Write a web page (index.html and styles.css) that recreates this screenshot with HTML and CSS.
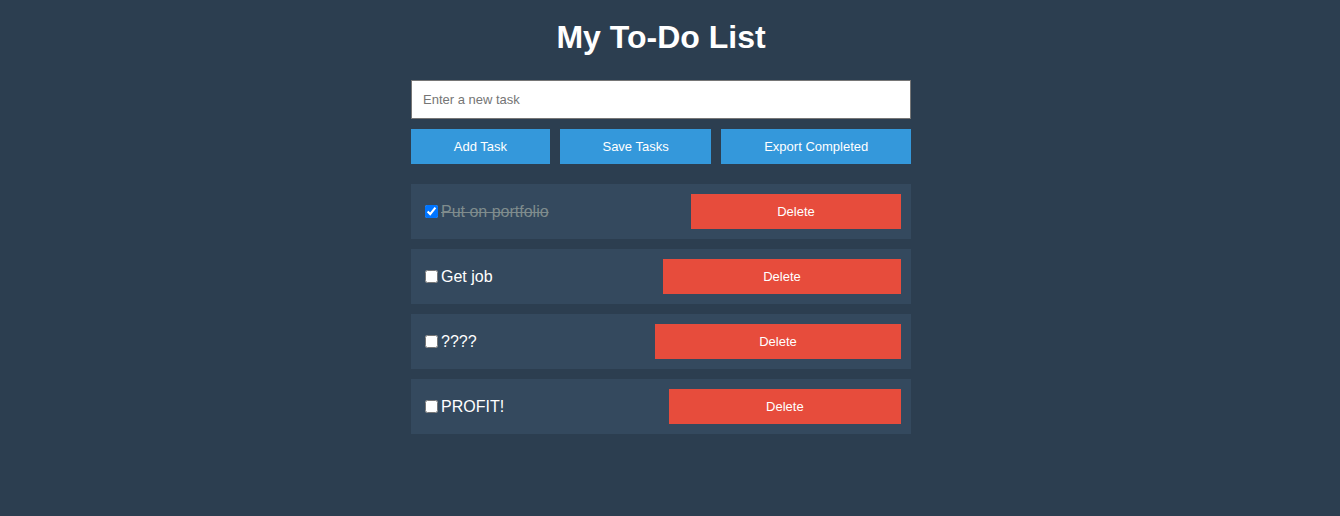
FILE: index.html
```html
<!DOCTYPE html>
<html lang="en">
<head>
<meta charset="utf-8">
<title>My To-Do List</title>
<link rel="stylesheet" href="styles.css">
</head>
<body>
<div class="container">
  <h1 class="title">My To-Do List</h1>
  <input class="task-input" type="text" placeholder="Enter a new task">
  <div class="actions">
    <button class="btn btn-blue">Add Task</button>
    <button class="btn btn-blue">Save Tasks</button>
    <button class="btn btn-blue">Export Completed</button>
  </div>
  <ul class="task-list">
    <li class="task">
      <label class="task-label done"><input type="checkbox" checked><span class="task-text">Put on portfolio</span></label>
      <button class="btn btn-red">Delete</button>
    </li>
    <li class="task">
      <label class="task-label"><input type="checkbox"><span class="task-text">Get job</span></label>
      <button class="btn btn-red">Delete</button>
    </li>
    <li class="task">
      <label class="task-label"><input type="checkbox"><span class="task-text">????</span></label>
      <button class="btn btn-red">Delete</button>
    </li>
    <li class="task">
      <label class="task-label"><input type="checkbox"><span class="task-text">PROFIT!</span></label>
      <button class="btn btn-red">Delete</button>
    </li>
  </ul>
</div>
</body>
</html>
```

FILE: styles.css
```css
html, body {
  background: #2c3e50;
}
body {
  margin: 0;
  padding: 19px 18px 20px 0;
  font-family: "Liberation Sans", Arial, sans-serif;
  color: #ffffff;
}
.container {
  width: 500px;
  margin: 0 auto;
}
.title {
  margin: 0 0 24px;
  font-size: 32px;
  font-weight: bold;
  text-align: center;
  line-height: 37px;
}
.task-input {
  display: block;
  box-sizing: border-box;
  width: 100%;
  height: 39px;
  margin: 0 0 10px;
  padding: 0 11px;
  border: 1px solid #767676;
  border-radius: 0;
  background: #ffffff;
  font-family: "Liberation Sans", Arial, sans-serif;
  font-size: 13px;
  color: #000;
}
.task-input::placeholder {
  color: #757575;
}
.actions {
  display: flex;
  gap: 10px;
  margin-bottom: 20px;
}
.btn {
  flex: 1 1 auto;
  box-sizing: border-box;
  height: 35px;
  padding: 0 15px;
  border: none;
  border-radius: 0;
  color: #ffffff;
  font-family: "Liberation Sans", Arial, sans-serif;
  font-size: 13px;
  cursor: pointer;
}
.btn-blue {
  background: #3498db;
}
.btn-red {
  background: #e74c3c;
}
.task-list {
  list-style: none;
  margin: 0;
  padding: 0;
  display: flex;
  flex-direction: column;
  gap: 10px;
}
.task {
  display: flex;
  align-items: center;
  height: 55px;
  box-sizing: border-box;
  padding: 10px;
  background: #34495e;
}
.task-label {
  flex: 1 1 auto;
  display: flex;
  align-items: center;
  font-size: 16px;
}
.task-label input {
  width: 13px;
  height: 13px;
  margin: 3px 3px 3px 4px;
}
.done .task-text {
  color: #7f8c8d;
  text-decoration: line-through;
}
```
